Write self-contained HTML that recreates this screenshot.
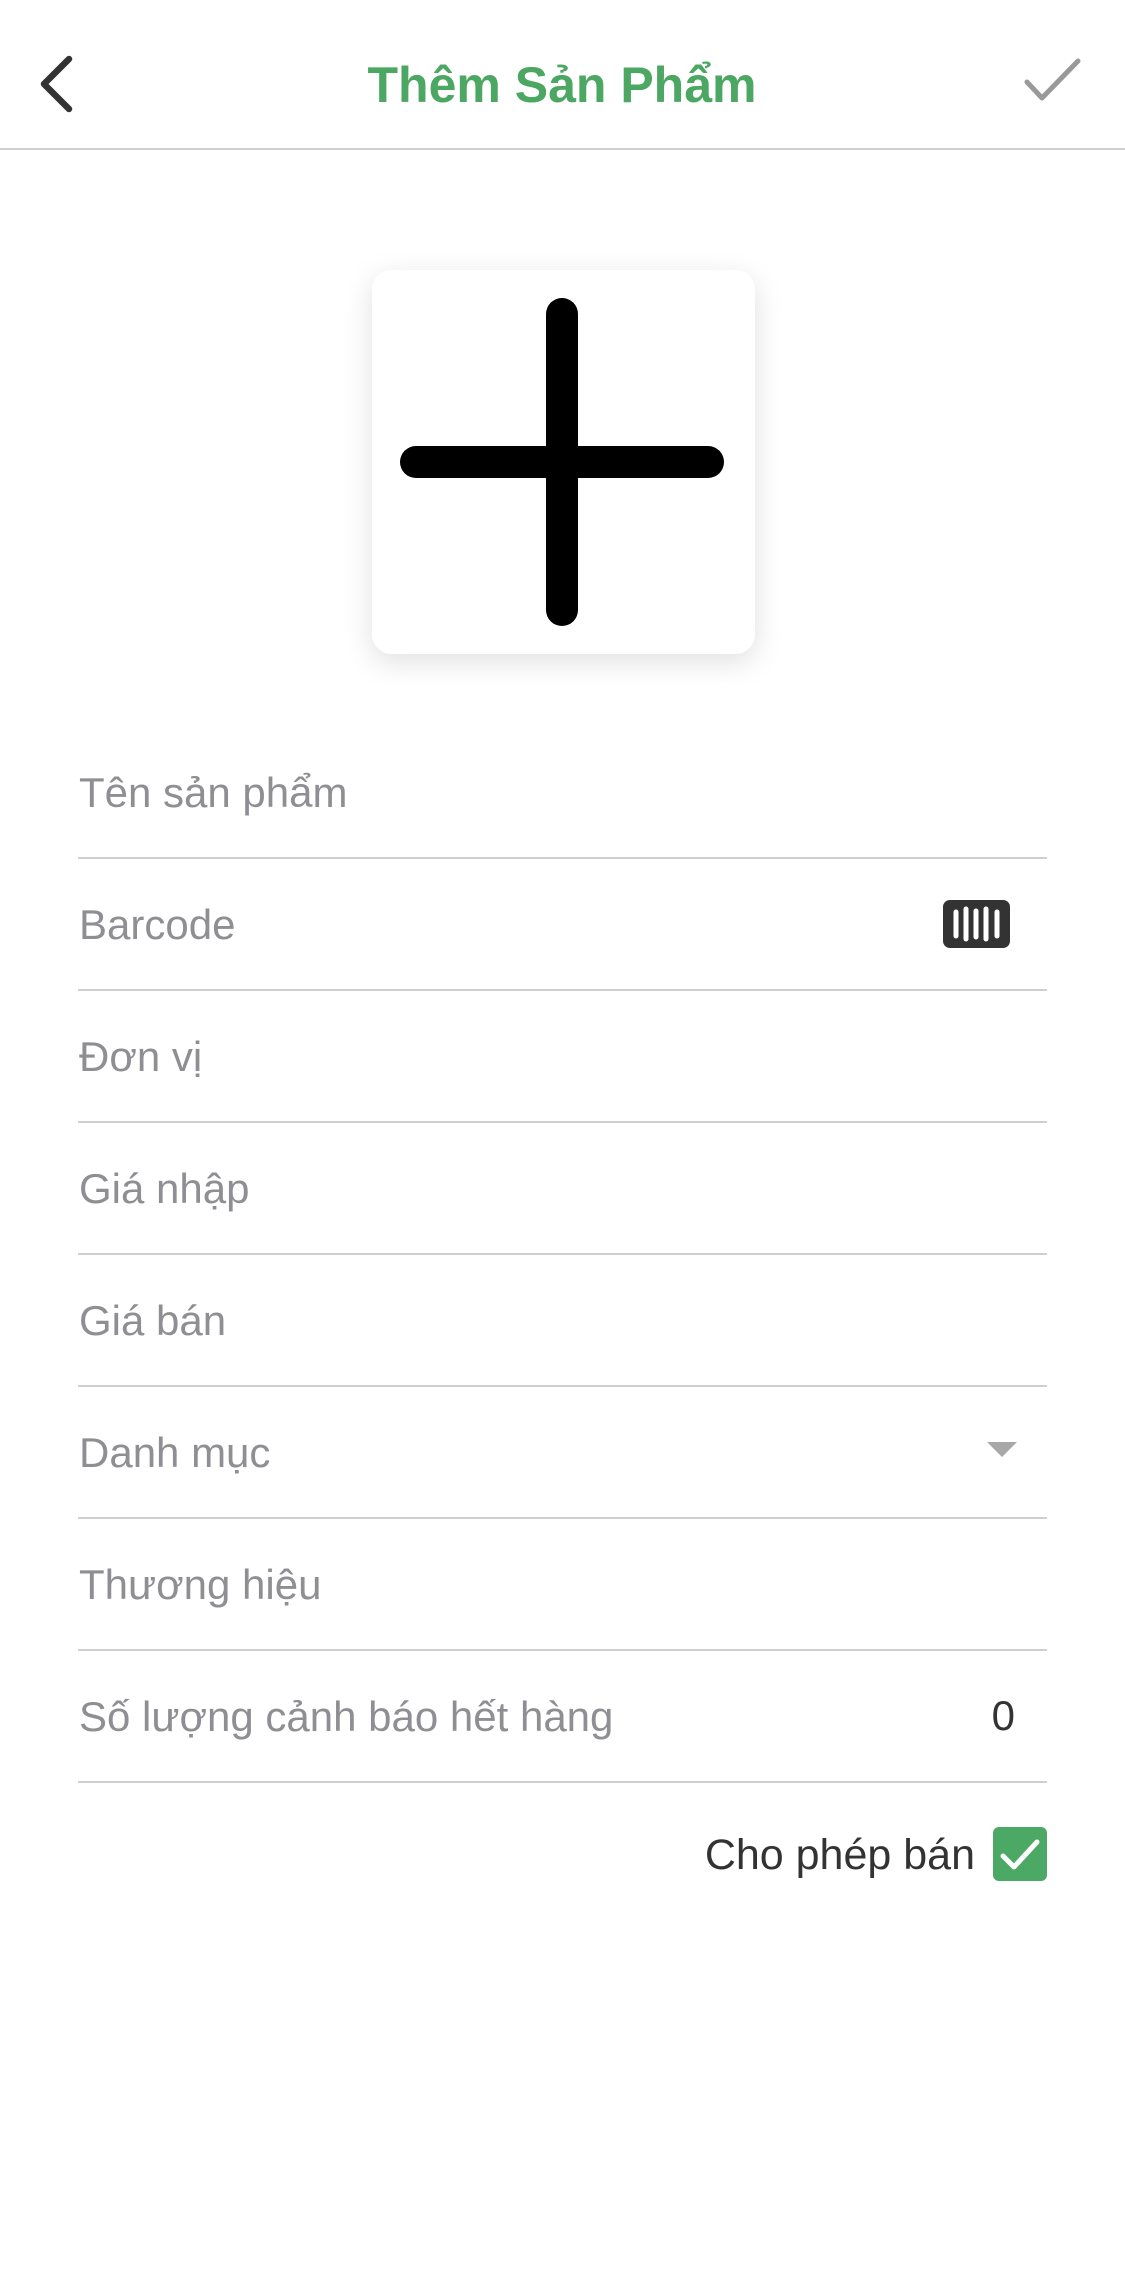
<!DOCTYPE html>
<html><head><meta charset="utf-8"><style>
html,body{margin:0;padding:0;background:#fff;width:1125px;height:2275px;overflow:hidden}
svg{display:block}
text{font-family:"Liberation Sans",sans-serif}
</style></head><body>
<svg width="1125" height="2275" viewBox="0 0 1125 2275" xmlns="http://www.w3.org/2000/svg">
<defs>
<filter id="sh" x="-30%" y="-30%" width="160%" height="160%">
<feDropShadow dx="0" dy="8" stdDeviation="14" flood-color="#000" flood-opacity="0.12"/>
</filter>
</defs>
<rect width="1125" height="2275" fill="#fff"/>
<path d="M69 59 L44 84 L69 109" fill="none" stroke="#333" stroke-width="6.5" stroke-linecap="round" stroke-linejoin="round"/>
<text x="562" y="102" text-anchor="middle" font-size="50" font-weight="bold" fill="#4ca763">Thêm Sản Phẩm</text>
<path d="M1027 82 L1042 98 L1078 61" fill="none" stroke="#999" stroke-width="5" stroke-linecap="round" stroke-linejoin="round"/>
<rect x="0" y="148" width="1125" height="2" fill="#d0d0d0"/>
<rect x="372" y="270" width="383" height="384" rx="20" fill="#fff" filter="url(#sh)"/>
<line x1="562" y1="314" x2="562" y2="610" stroke="#000" stroke-width="32" stroke-linecap="round"/>
<line x1="416" y1="462" x2="708" y2="462" stroke="#000" stroke-width="32" stroke-linecap="round"/>
<g font-size="42" fill="#8e8e93">
<text x="79" y="807">Tên sản phẩm</text>
<text x="79" y="939">Barcode</text>
<text x="79" y="1071">Đơn vị</text>
<text x="79" y="1203">Giá nhập</text>
<text x="79" y="1335">Giá bán</text>
<text x="79" y="1467">Danh mục</text>
<text x="79" y="1599">Thương hiệu</text>
<text x="79" y="1731">Số lượng cảnh báo hết hàng</text>
</g>
<g fill="#d0d0d0">
<rect x="78" y="857" width="969" height="2"/>
<rect x="78" y="989" width="969" height="2"/>
<rect x="78" y="1121" width="969" height="2"/>
<rect x="78" y="1253" width="969" height="2"/>
<rect x="78" y="1385" width="969" height="2"/>
<rect x="78" y="1517" width="969" height="2"/>
<rect x="78" y="1649" width="969" height="2"/>
<rect x="78" y="1781" width="969" height="2"/>
</g>
<rect x="943" y="900" width="67" height="48" rx="7" fill="#333"/>
<g stroke="#fff" stroke-width="5" stroke-linecap="round">
<line x1="956" y1="912" x2="956" y2="936"/>
<line x1="966" y1="909" x2="966" y2="939"/>
<line x1="976" y1="911" x2="976" y2="937"/>
<line x1="986" y1="909" x2="986" y2="939"/>
<line x1="997" y1="912" x2="997" y2="936"/>
</g>
<path d="M987 1442 L1017 1442 L1002 1457 Z" fill="#a8a8a8"/>
<text x="1015" y="1730" text-anchor="end" font-size="42" fill="#333">0</text>
<text x="975" y="1869" text-anchor="end" font-size="43" fill="#333">Cho phép bán</text>
<rect x="993" y="1827" width="54" height="54" rx="6" fill="#4ba865"/>
<path d="M1003 1856 L1014 1867 L1037 1842" fill="none" stroke="#fff" stroke-width="5" stroke-linecap="round" stroke-linejoin="round"/>
</svg>
</body></html>
